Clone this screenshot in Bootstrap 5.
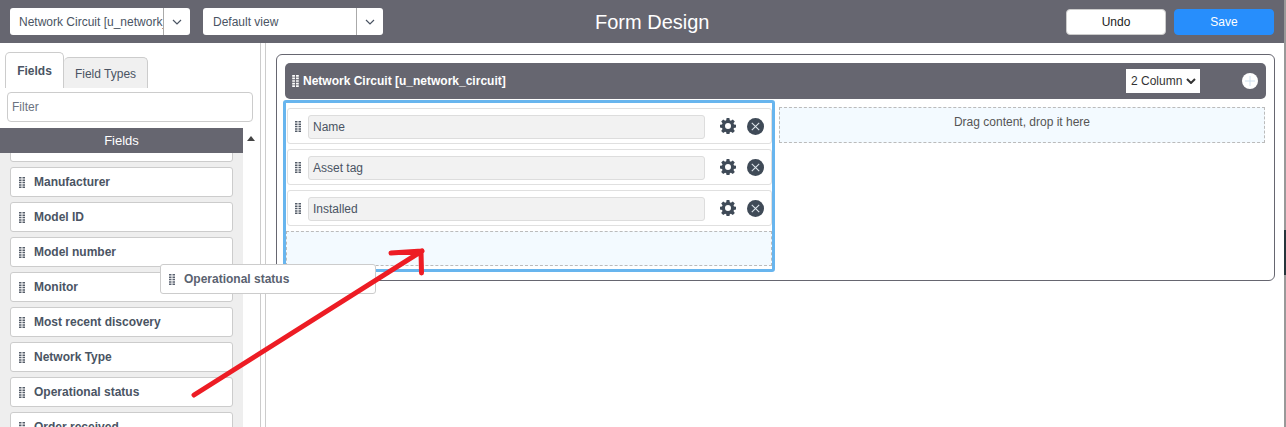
<!DOCTYPE html>
<html lang="en">
<head>
<meta charset="UTF-8">
<title>Form Design</title>
<link href="https://cdn.jsdelivr.net/npm/bootstrap@5.3.3/dist/css/bootstrap.min.css" rel="stylesheet">
<style>
    html, body { height: 427px; overflow: hidden; }
    body { font-family: "Liberation Sans", Arial, sans-serif; font-size: 12px; color: #4a5463; background: #fff; position: relative; }

    .top-bar { height: 43px; background: #666670; padding: 0 12px 0 10px; }
    .pick { height: 27px; width: 180px; background: #fff; border-radius: 3px; color: #4a5463; overflow: hidden; }
    .pick-view { margin-left: 13px; }
    .pick-text { flex: 1; min-width: 0; white-space: nowrap; overflow: hidden; padding-left: 9px; }
    .pick-view .pick-text { padding-left: 10px; }
    .pick-arrow { width: 27px; height: 100%; border-left: 1px solid #aaa; }
    .form-title { font-size: 20px; color: #fff; left: 595px; top: 9px; line-height: 26px; }
    .top-btn { width: 100px; height: 26px; border-radius: 4px; font-size: 12px; padding: 0; line-height: 24px; }
    .btn-undo { background: #fff; border: 1px solid #ccc; color: #222; }
    .btn-save { background: #278efc; border: 1px solid #278efc; color: #fff; margin-left: 8px; }

    .work-area { height: 384px; }
    .side-pane { width: 261px; border-right: 1px solid #ccc; flex: none; }
    .pane-gap { width: 4px; flex: none; }
    .main-pane { flex: 1; border-left: 1px solid #ccc; padding: 11px 11px 0 10px; }

    .tab-row { padding: 9px 0 0 5px; height: 45px; }
    .tab-item { border: 1px solid #ccc; border-bottom: 0; border-radius: 5px 5px 0 0; }
    .tab-on { width: 59px; height: 36px; background: #fff; font-weight: 700; text-align: center; padding-top: 9px; }
    .tab-off { width: 84px; height: 31px; margin-top: 5px; background: #f0f0f0; text-align: center; padding-top: 7px; border-left: 0; }
    .filter-box { display: block; margin: 4px 0 0 7px; width: 246px; height: 30px; border: 1px solid #ccc; border-radius: 4px; font-size: 12px; padding: 0 4px; color: #4a5463; outline: 0; }
    .filter-box::placeholder { color: #6b7380; opacity: 1; }

    .field-area { margin-top: 6px; height: 299px; }
    .field-col { width: 243px; background: #eee; overflow: hidden; }
    .field-head { height: 25px; line-height: 25px; background: #666670; color: #fff; font-size: 13px; text-align: center; position: relative; z-index: 1; }
    .field-list { margin-top: -21px; padding: 0 10px; }
    .field-row { height: 30px; margin-bottom: 5px; background: #fff; border: 1px solid #ccc; border-radius: 3px; padding-left: 8px; font-weight: 700; }
    .field-row svg { margin-right: 9px; color: #555d69; }
    .scroll-col { width: 17px; background: #fff; }
    .scroll-up { width: 0; height: 0; border-left: 4px solid transparent; border-right: 4px solid transparent; border-bottom: 5px solid #444; margin: 8px auto 0 4px; }

    .form-frame { height: 227px; border: 1px solid #666670; border-radius: 6px; padding: 8px; position: relative; }
    .section-bar { height: 36px; background: #666670; border-radius: 5px; color: #fff; font-weight: 700; padding: 0 8px 0 7px; }
    .section-bar > svg:first-child { margin-right: 4px; }
    .col-select { width: 74px; height: 24px; background: #fff; color: #333; font-weight: 400; padding-left: 5px; margin-left: auto; margin-right: 42px; }
    .add-round { width: 16px; height: 16px; border-radius: 50%; background: #fff; }

    .section-body { margin-left: -2px; margin-top: 1px; }
    .col-active { width: 492px; height: 172px; border: 3px solid #68b5ee; border-radius: 3px; padding: 5px 0 0 1px; flex: none; }
    .col-empty { flex: 1; padding: 7px 1px 0 4px; }
    .slot-row { width: 485px; height: 36px; margin-bottom: 5px; border: 1px solid #e0e0e0; border-radius: 3px; padding-left: 7px; }
    .slot-row svg.grip { margin-right: 7px; color: #555d69; }
    .slot-input { width: 397px; height: 24px; line-height: 22px; background: #f2f2f2; border: 1px solid #ddd; border-radius: 3px; padding-left: 4px; margin-top: 2px; }
    .gear { margin-left: 15px; margin-right: 11px; }
    .drop-zone { background: #f3faff; border: 1px dashed #bbb; }
    .drop-left { width: 486px; height: 35px; margin-left: -1px; }
    .drop-right { height: 36px; text-align: center; padding-top: 5px; color: #555; }

    .drag-ghost { left: 160px; top: 264px; width: 216px; height: 30px; background: #fff; border: 1px solid #ccc; border-radius: 3px; padding-left: 8px; font-weight: 700; color: #5a6270; z-index: 5; }
    .drag-ghost svg { margin-right: 9px; }
    .arrow-over { left: 0; top: 0; z-index: 6; pointer-events: none; }
    .edge-strip { right: 0; top: 0; width: 2px; height: 427px; z-index: 7; background: linear-gradient(#999 0, #999 230px, #26363c 230px, #26363c 275px, #999 275px); }
</style>
</head>
<body>
<svg width="0" height="0" class="position-absolute">
    <symbol id="grip" viewBox="0 0 6 11">
        <path fill="currentColor" d="M0 0h2.500v1.500H0zM3.500 0H6v1.500H3.500zM0 2.400h2.500v1.500H0zM3.500 2.400H6v1.500H3.500zM0 4.800h2.500v1.500H0zM3.500 4.800H6v1.500H3.500zM0 7.200h2.500v1.500H0zM3.500 7.200H6v1.500H3.500zM0 9.500h2.500V11H0zM3.500 9.500H6V11H3.500z"/>
    </symbol>
    <symbol id="gear" viewBox="0 0 16 16">
        <path fill="#3f4a57" fill-rule="evenodd" d="M6.600 0h2.800l.4 2.200 1.100.5 1.900-1.300 2 2-1.300 1.900.5 1.100 2 .4v2.800l-2 .4-.5 1.100 1.300 1.900-2 2-1.900-1.300-1.100.5-.4 2.200H6.600l-.4-2.200-1.100-.5-1.900 1.300-2-2 1.300-1.900-.5-1.100-2-.4V6.800l2-.4.5-1.100-1.300-1.900 2-2 1.900 1.300 1.100-.5zM8 5a3 3 0 1 0 0 6 3 3 0 0 0 0-6z"/>
    </symbol>
    <symbol id="close" viewBox="0 0 16 16">
        <circle cx="8" cy="8" r="8" fill="#3f4a57"/>
        <path stroke="#dfe6ec" stroke-width="1" d="M4.500 4.500l7 7M11.500 4.500l-7 7"/>
    </symbol>
    <symbol id="chev" viewBox="0 0 10 6">
        <path fill="none" stroke="#4a5463" stroke-width="1.200" d="M1 1l4 4 4-4"/>
    </symbol>
</svg>

<header class="top-bar d-flex align-items-center position-relative">
    <div class="pick d-flex align-items-center">
        <span class="pick-text">Network Circuit [u_network_circuit]</span>
        <span class="pick-arrow d-flex align-items-center justify-content-center"><svg width="10" height="6"><use href="#chev"/></svg></span>
    </div>
    <div class="pick pick-view d-flex align-items-center">
        <span class="pick-text">Default view</span>
        <span class="pick-arrow d-flex align-items-center justify-content-center"><svg width="10" height="6"><use href="#chev"/></svg></span>
    </div>
    <div class="form-title position-absolute">Form Design</div>
    <button class="btn top-btn btn-undo ms-auto" type="button">Undo</button>
    <button class="btn top-btn btn-save" type="button">Save</button>
</header>

<div class="work-area d-flex">
    <aside class="side-pane">
        <div class="tab-row d-flex">
            <div class="tab-item tab-on">Fields</div>
            <div class="tab-item tab-off">Field Types</div>
        </div>
        <input class="filter-box" type="text" placeholder="Filter">
        <div class="field-area d-flex">
            <div class="field-col">
                <div class="field-head">Fields</div>
                <div class="field-list">
                    <div class="field-row d-flex align-items-center"></div>
                    <div class="field-row d-flex align-items-center"><svg width="6" height="11"><use href="#grip"/></svg>Manufacturer</div>
                    <div class="field-row d-flex align-items-center"><svg width="6" height="11"><use href="#grip"/></svg>Model ID</div>
                    <div class="field-row d-flex align-items-center"><svg width="6" height="11"><use href="#grip"/></svg>Model number</div>
                    <div class="field-row d-flex align-items-center"><svg width="6" height="11"><use href="#grip"/></svg>Monitor</div>
                    <div class="field-row d-flex align-items-center"><svg width="6" height="11"><use href="#grip"/></svg>Most recent discovery</div>
                    <div class="field-row d-flex align-items-center"><svg width="6" height="11"><use href="#grip"/></svg>Network Type</div>
                    <div class="field-row d-flex align-items-center"><svg width="6" height="11"><use href="#grip"/></svg>Operational status</div>
                    <div class="field-row d-flex align-items-center"><svg width="6" height="11"><use href="#grip"/></svg>Order received</div>
                </div>
            </div>
            <div class="scroll-col"><div class="scroll-up"></div></div>
        </div>
    </aside>
    <div class="pane-gap"></div>
    <main class="main-pane">
        <div class="form-frame">
            <div class="section-bar d-flex align-items-center">
                <svg width="7" height="12"><use href="#grip"/></svg>
                <span>Network Circuit [u_network_circuit]</span>
                <div class="col-select d-flex align-items-center justify-content-between">2 Column <svg width="10" height="6" class="me-1"><path fill="none" stroke="#333" stroke-width="2" d="M1 1l4 4 4-4"/></svg></div>
                <span class="add-round d-flex align-items-center justify-content-center"><svg width="12" height="12"><path stroke="#cfe0ee" d="M6 1v10M1 6h10"/></svg></span>
            </div>
            <div class="section-body d-flex">
                <div class="col-active">
                    <div class="slot-row d-flex align-items-center">
                        <svg class="grip" width="6" height="11"><use href="#grip"/></svg>
                        <div class="slot-input">Name</div>
                        <svg class="gear" width="16" height="16"><use href="#gear"/></svg>
                        <svg width="17" height="17"><use href="#close"/></svg>
                    </div>
                    <div class="slot-row d-flex align-items-center">
                        <svg class="grip" width="6" height="11"><use href="#grip"/></svg>
                        <div class="slot-input">Asset tag</div>
                        <svg class="gear" width="16" height="16"><use href="#gear"/></svg>
                        <svg width="17" height="17"><use href="#close"/></svg>
                    </div>
                    <div class="slot-row d-flex align-items-center">
                        <svg class="grip" width="6" height="11"><use href="#grip"/></svg>
                        <div class="slot-input">Installed</div>
                        <svg class="gear" width="16" height="16"><use href="#gear"/></svg>
                        <svg width="17" height="17"><use href="#close"/></svg>
                    </div>
                    <div class="drop-zone drop-left"></div>
                </div>
                <div class="col-empty">
                    <div class="drop-zone drop-right">Drag content, drop it here</div>
                </div>
            </div>
        </div>
    </main>
</div>

<div class="drag-ghost position-absolute d-flex align-items-center"><svg width="6" height="11"><use href="#grip"/></svg>Operational status</div>

<svg class="arrow-over position-absolute" width="1286" height="427">
    <path fill="none" stroke="#ed1c24" stroke-width="5" stroke-linecap="round" d="M194 395L422 251M391 253L422 251M421 251L421.500 273"/>
</svg>
<div class="edge-strip position-absolute"></div>
</body>
</html>
